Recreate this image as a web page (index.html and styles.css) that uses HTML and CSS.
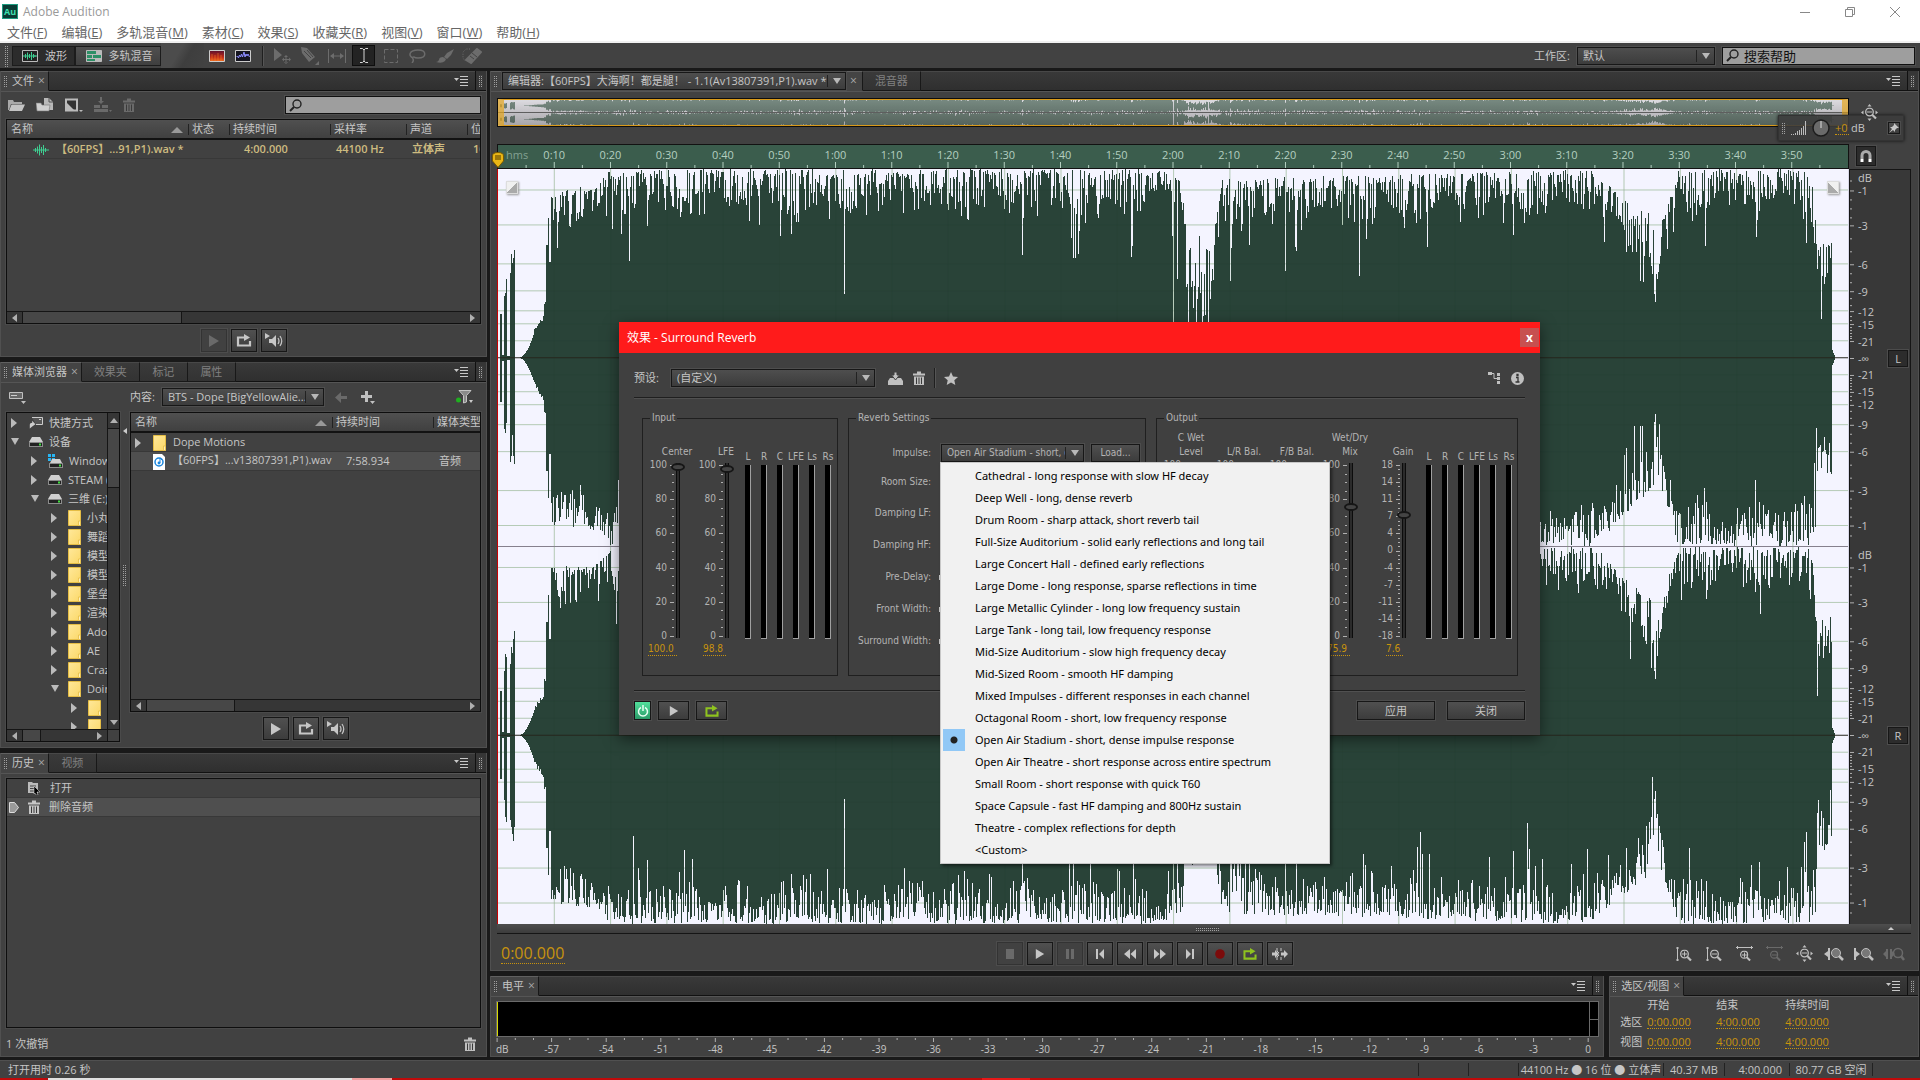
FILE: index.html
```html
<!DOCTYPE html>
<html lang="zh-CN">
<head>
  <meta charset="UTF-8">
  <meta name="viewport" content="width=device-width, initial-scale=1">
  <title>Adobe Audition</title>
  <link rel="stylesheet" href="styles.css">
</head>
<body>
  <!-- Icon sprite -->
  <svg class="sprite" aria-hidden="true">
    <defs>
      <linearGradient id="folderFill" x1="0" y1="0" x2="1" y2="1"><stop offset="0" stop-color="#ffe89a"/><stop offset="1" stop-color="#fbd868"/></linearGradient>
      <linearGradient id="heat" x1="0" y1="0" x2="0" y2="1"><stop offset="0" stop-color="#5a1030"/><stop offset=".6" stop-color="#c02a18"/><stop offset="1" stop-color="#f07020"/></linearGradient>
    </defs>
    <symbol id="i-menu" viewBox="0 0 14 10"><path d="M0 2h5L2.500 5z" fill="#c8c8c8"/><path d="M6 .5h8M6 3.500h8M6 6.500h8M6 9.500h8" stroke="#c8c8c8"/></symbol>
    <symbol id="i-search" viewBox="0 0 13 13"><circle cx="8" cy="5" r="4" fill="none" stroke="#222" stroke-width="1.400"/><path d="M5 8L1 12" stroke="#222" stroke-width="2"/></symbol>
    <symbol id="i-open" viewBox="0 0 17 14"><path d="M0 2h5l1 2h8v2H3L1 12H0z" fill="#a9a9a9"/><path d="M3.500 6.500H17L14 13H1z" fill="#c4c4c4"/></symbol>
    <symbol id="i-import" viewBox="0 0 18 16"><path d="M8 1h5l4 4v8H8z" fill="#b9b9b9"/><path d="M13 1v4h4" fill="none" stroke="#555"/><path d="M0 6h5l1 2h8l-1 6H1z" fill="#cfcfcf" stroke="#777" stroke-width=".6"/></symbol>
    <symbol id="i-new" viewBox="0 0 18 14"><path d="M1 1.500h11v11H1z" fill="#333" stroke="#bbb" stroke-width="2"/><path d="M2 5l7 7H2z" fill="#bbb"/><path d="M14 12h4l-2 2z" fill="#bbb"/></symbol>
    <symbol id="i-insert" viewBox="0 0 18 16"><path d="M0 8h6v3H0zM8 8h6v3H8zM0 12h14v3H0z"/><path d="M6 0h2v4h2L7 7 4 4h2zM15 13h3l-1.500 2z"/></symbol>
    <symbol id="i-trash" viewBox="0 0 12 14"><path d="M0 2.500h12v2H0zM4 .5h4v2H4z"/><path d="M1 5.500h10V14H1z"/><path d="M3.500 6.500v6.500M6 6.500v6.500M8.500 6.500v6.500" stroke="#3a3a3a"/></symbol>
    <symbol id="i-play" viewBox="0 0 12 12"><path d="M1 0l10 6-10 6z"/></symbol>
    <symbol id="i-loop" viewBox="0 0 16 13"><path d="M9 3.500H2v8h12V7" fill="none" stroke="currentColor" stroke-width="2.200"/><path d="M8 0l6 3.500L8 7z" fill="currentColor"/></symbol>
    <symbol id="i-speaker" viewBox="0 0 18 16"><path d="M0 0l5 3-5 3zM4 6h3l4-4v12l-4-4H4z"/><path d="M13 5q2 3 0 6M15 3q3.500 5 0 10" fill="none" stroke="currentColor" stroke-width="1.200"/></symbol>
    <symbol id="i-drive" viewBox="0 0 14 10"><path d="M3 0h8l3 5H0z" fill="#d0d0d0"/><path d="M0 5h14v5H0z" fill="#8c8c8c"/><path d="M1 6h12v3H1z" fill="#222"/><path d="M10 6.500h2v2h-2z" fill="#3fe03f"/></symbol>
    <symbol id="i-windrive" viewBox="0 0 15 14"><path d="M0 0h3v3H0zM4 0h3v3H4zM0 4h3v3H0zM4 4h3v3H4z" fill="#27b6f4"/><path d="M4 5h8l2 4H2z" fill="#d0d0d0"/><path d="M1 9h14v5H1z" fill="#8c8c8c"/><path d="M2 10h12v3H2z" fill="#222"/><path d="M11 10.500h2v2h-2z" fill="#3fe03f"/></symbol>
    <symbol id="i-shortcut" viewBox="0 0 14 12"><path d="M3 .5h10.500v7H7" fill="#555" stroke="#ccc"/><path d="M10 2.500h2" stroke="#ccc"/><path d="M1 12V8q0-2 3-2V4l4 3.500L4 10z" fill="#ccc" transform="scale(.8 .95)"/></symbol>
    <symbol id="i-folder" viewBox="0 0 13 16"><path d="M.5.500h12v15H.5z" fill="url(#folderFill)" stroke="#e5bd45"/><path d="M10.500 11h2v4.500h-2z" fill="#fff0b8" stroke="#e5bd45" stroke-width=".8"/></symbol>
    <symbol id="i-file" viewBox="0 0 12 16"><path d="M0 0h9l3 3v13H0z" fill="#fff"/><circle cx="6" cy="8" r="4" fill="none" stroke="#1a86dd" stroke-width="1.500"/><path d="M7 9V4l2 2" fill="none" stroke="#1a86dd"/><circle cx="6" cy="9" r="1.400" fill="#1a86dd"/></symbol>
    <symbol id="i-wave" viewBox="0 0 16 12"><path d="M0 6h16M2.500 4v4M4.500 2.500v7M6.500.500v11M8.500 3v6M10.500 1v10M12.500 4v4" stroke="#3ecf92" fill="none"/></symbol>
    <symbol id="i-waveform" viewBox="0 0 16 12"><path d="M.5.500h15v11H.5z" fill="#222" stroke="#bbb"/><path d="M1 6h14M3.500 4v4M5.500 2.500v7M7.500 4v4M9.500 2v8M11.500 4v4M13 5v2" stroke="#3ecf92"/></symbol>
    <symbol id="i-multi" viewBox="0 0 16 12"><path d="M.5.500h15v11H.5z" fill="#bbb" stroke="#bbb"/><path d="M1 1h9v3H1zM1 5h5v3H1zM7 5h8v3H7zM1 9h8v2H1z" fill="#2d8f66"/></symbol>
    <symbol id="i-spectral" viewBox="0 0 16 12"><path d="M.5.500h15v11H.5z" fill="url(#heat)" stroke="#ccc"/><path d="M3 4v7M6 5v6M9 3v8M12 5v6" stroke="#f58a2a" opacity=".5"/></symbol>
    <symbol id="i-pitch" viewBox="0 0 16 12"><path d="M.5.500h15v11H.5z" fill="#15151f" stroke="#ccc"/><path d="M1.500 7l1-1 1 2 1-3 1 2 1-3 1 3 1.500-5 1 5 1-3 1 2 1-2 1.500 3" fill="none" stroke="#8d8dff"/></symbol>
    <symbol id="i-move" viewBox="0 0 18 16"><path d="M0 0l8 7-8 6zM12 7l2 2h-4zM12 16l2-2h-4zM8 11.500l2-2v4zM17 11.500l-2-2v4zM11.500 8h1v7h-1zM9 11h6v1H9z"/></symbol>
    <symbol id="i-razor" viewBox="0 0 18 18"><path d="M0 0l6 1 8 9-6 5-7-9zM14 18h4v-4z"/><path d="M3 4l7 7M6 3l6 7" stroke="#444"/></symbol>
    <symbol id="i-slip" viewBox="0 0 18 14"><path d="M.5 0v14M17.500 0v14M3 7h12" stroke="currentColor"/><path d="M2 7l4-3v6zM16 7l-4-3v6z"/></symbol>
    <symbol id="i-ibeam" viewBox="0 0 8 15"><path d="M0 .5h2.500L4 2 5.500.500H8M4 2v11M0 14.500h2.500L4 13l1.500 1.500H8" fill="none" stroke="#d5d5d5"/></symbol>
    <symbol id="i-marquee" viewBox="0 0 14 14"><path d="M.5.500h13v13H.5z" fill="none" stroke="currentColor" stroke-dasharray="4 2"/></symbol>
    <symbol id="i-lasso" viewBox="0 0 17 14"><path d="M4 9C-1 7 0 1 9 1s9 8 0 8q-3 0-4-1-2 0-1 2t-1 4" fill="none" stroke="currentColor" stroke-width="1.500"/></symbol>
    <symbol id="i-brush" viewBox="0 0 18 14"><path d="M18 0l-7 4-3 4 3 2 4-4zM7 8q-4 0-4 3-1 2-3 2 6 2 9-1l1-2z"/></symbol>
    <symbol id="i-heal" viewBox="0 0 20 16"><path d="M15 1l4 3L9 15l-5-3z" stroke="currentColor" stroke-width="2" stroke-linejoin="round"/><path d="M10 5l5 4M8 8l4 3" stroke="#444"/><path d="M8 1H4L1 4v6l2 3" fill="none" stroke="currentColor" stroke-dasharray="1 1.500"/></symbol>
    <symbol id="i-filter" viewBox="0 0 17 14"><path d="M3 .5h12l-4.500 5V12l-3 1V5.500z" fill="#8a8a8a" stroke="#c4c4c4"/><circle cx="2.500" cy="10" r="2.500" fill="#1faf1f"/><path d="M13 10h4l-2 3z" fill="#ccc"/></symbol>
    <symbol id="i-plus" viewBox="0 0 14 13"><path d="M4 0h3v4h4v3H7v4H4V7H0V4h4zM9 10h5l-2.500 3z"/></symbol>
    <symbol id="i-back" viewBox="0 0 12 11"><path d="M0 5.500L6 0v4h6v3H6v4z"/></symbol>
    <symbol id="i-display" viewBox="0 0 17 13"><path d="M.5 1.500h13v6H.5z" fill="#666" stroke="#c0c0c0"/><path d="M2 4.500h6" stroke="#ccc"/><path d="M12 10h5l-2.500 3z"/></symbol>
    <symbol id="i-doc" viewBox="0 0 13 14"><path d="M0 1h4l1 1h5v10H0z" fill="#bbb"/><path d="M2 5h6M2 7.500h5M2 10h4" stroke="#444"/><path d="M6 5l6 6H9l1 3-2 0-1-2-1 1z" fill="#000" stroke="#ddd" stroke-width=".5"/></symbol>
    <symbol id="i-save" viewBox="0 0 15 13"><path d="M2 6h11l2 3v4H0V9z"/><path d="M6 0h3v3h2.500L7.500 8 3.500 3H6z" stroke="#404040"/></symbol>
    <symbol id="i-star" viewBox="0 0 14 13"><path d="M7 0l2 4.500 5 .5-3.700 3.300L11.300 13 7 10.600 2.700 13l1-4.700L0 5l5-.5z"/></symbol>
    <symbol id="i-route" viewBox="0 0 12 12"><path d="M0 0h4v3H0zM9 1h3v3H9zM9 5h3v3H9zM9 9h3v3H9z"/><path d="M4 1.500h2v5h3" fill="none" stroke="currentColor"/></symbol>
    <symbol id="i-info" viewBox="0 0 13 13"><circle cx="6.500" cy="6.500" r="6.500"/><path d="M5 5.500h2v4.500M4.500 10h4M6 2.500h1v1H6z" stroke="#333" fill="none" stroke-width="1.300"/></symbol>
    <symbol id="i-power" viewBox="0 0 12 12"><path d="M4 2.500a4.500 4.500 0 1 0 4 0M6 0v6" fill="none" stroke="#e8fff3" stroke-width="1.500"/></symbol>
    <symbol id="i-stop" viewBox="0 0 10 10"><path d="M1 0h8v10H1z"/></symbol>
    <symbol id="i-pause" viewBox="0 0 10 10"><path d="M1 0h3v10H1zM6 0h3v10H6z"/></symbol>
    <symbol id="i-start" viewBox="0 0 10 10"><path d="M1 0h2v10H1zM9 0v10L4 5z"/></symbol>
    <symbol id="i-rew" viewBox="0 0 12 10"><path d="M6 0v10L0 5zM12 0v10L6.500 5z"/></symbol>
    <symbol id="i-fwd" viewBox="0 0 12 10"><path d="M0 0v10l5.500-5zM6 0v10l6-5z"/></symbol>
    <symbol id="i-end" viewBox="0 0 10 10"><path d="M7 0h2v10H7zM1 0v10l5-5z"/></symbol>
    <symbol id="i-rec" viewBox="0 0 10 10"><circle cx="5" cy="5" r="4.800" fill="#7c0b0b"/></symbol>
    <symbol id="i-skip" viewBox="0 0 16 12"><path d="M0 4.500h3V2l4 4-4 4V7.500H0zM9 4.500h3V2l4 4-4 4V7.500H9z"/><path d="M5 0v3l2 2M9 0v3M5 12V9l2-2M9 12V9" fill="none" stroke="currentColor"/></symbol>
    <symbol id="g-lens" viewBox="0 0 12 12"><circle cx="4.500" cy="4.500" r="3.800" fill="none" stroke="currentColor" stroke-width="1.300"/><path d="M7.500 7.500L11 11" stroke="currentColor" stroke-width="2.200"/></symbol>
    <symbol id="i-vin" viewBox="0 0 17 16"><path d="M1.500 1v14M0 2h3M0 14h3M6 8h5M8.500 5.500v5" stroke="currentColor"/><use href="#g-lens" x="4" y="3.500" width="12" height="12"/></symbol>
    <symbol id="i-vout" viewBox="0 0 17 16"><path d="M1.500 1v14M0 2h3M0 14h3M6 8h5" stroke="currentColor"/><use href="#g-lens" x="4" y="3.500" width="12" height="12"/></symbol>
    <symbol id="i-hin" viewBox="0 0 17 16"><path d="M0 1.500h17M1.500 0v3M15.500 0v3M6 9h5M8.500 6.500v5" stroke="currentColor"/><use href="#g-lens" x="4" y="4.500" width="11" height="11"/></symbol>
    <symbol id="i-hout" viewBox="0 0 17 16"><path d="M0 1.500h17M1.500 0v3M15.500 0v3M6 9h5" stroke="currentColor"/><use href="#g-lens" x="4" y="4.500" width="11" height="11"/></symbol>
    <symbol id="i-full" viewBox="0 0 17 17"><path d="M8.500 0l2 2.500h-4zM8.500 17l2-2.500h-4zM0 8.500l2.500-2v4zM17 8.500l-2.500-2v4z"/><path d="M6 8h5" stroke="currentColor"/><use href="#g-lens" x="4" y="3.500" width="12" height="12"/></symbol>
    <symbol id="i-zl" viewBox="0 0 20 14"><path d="M4 1h2v12H4zM0 7l4-3v6z"/><circle cx="12" cy="6" r="4.500" fill="#777" stroke="currentColor"/><path d="M15 9l4 4" stroke="currentColor" stroke-width="2.500"/></symbol>
    <symbol id="i-zr" viewBox="0 0 20 14"><path d="M0 1h2v12H0zM6 7L2 4v6z"/><circle cx="12" cy="6" r="4.500" fill="#777" stroke="currentColor"/><path d="M15 9l4 4" stroke="currentColor" stroke-width="2.500"/></symbol>
    <symbol id="i-zs" viewBox="0 0 22 14"><path d="M3 2h2v10H3zM0 7l3-3v6zM7 2h2v10H7zM12 7L9 4v6z"/><circle cx="15" cy="6" r="4.500" fill="none" stroke="currentColor" stroke-width="1.500"/><path d="M18 9l3 4" stroke="currentColor" stroke-width="2.500"/></symbol>
    <symbol id="i-magnet" viewBox="0 0 12 13"><path d="M2 9V5.500a4 4 0 0 1 8 0V9" fill="none" stroke="#aaa" stroke-width="3"/><path d="M.5 9h3v3h-3zM8.500 9h3v3h-3z" fill="#fff"/></symbol>
    <symbol id="i-pin" viewBox="0 0 10 10"><path d="M5 0l5 5-2 0-2 2 0 2-2-2-4 3 3-4-2-2h2l2-2z"/></symbol>
  </svg>

  <!-- Title bar and menu -->
  <header class="titlebar">
    <div class="title-row">
      <span class="app-logo">Au</span>
      <span class="app-name">Adobe Audition</span>
      <div class="win-buttons">
        <button aria-label="最小化"><svg width="10" height="10"><path d="M0 5.500h10" stroke="#888"/></svg></button>
        <button aria-label="还原"><svg width="10" height="10"><path d="M.5 2.500h7v7h-7zM2.500 2V.5h7v7H8" fill="none" stroke="#888"/></svg></button>
        <button aria-label="关闭窗口"><svg width="10" height="10"><path d="M0 0l10 10M10 0L0 10" stroke="#888"/></svg></button>
      </div>
    </div>
    <nav class="menubar">
      <a href="#">文件(<u>F</u>)</a><a href="#">编辑(<u>E</u>)</a><a href="#">多轨混音(<u>M</u>)</a><a href="#">素材(<u>C</u>)</a><a href="#">效果(<u>S</u>)</a><a href="#">收藏夹(<u>R</u>)</a><a href="#">视图(<u>V</u>)</a><a href="#">窗口(<u>W</u>)</a><a href="#">帮助(<u>H</u>)</a>
    </nav>
  </header>

  <!-- Toolbar -->
  <div class="toolbar">
    <i class="grip tall"></i>
    <button class="mode on"><svg width="16" height="12"><use href="#i-waveform"/></svg>波形</button>
    <button class="mode multi"><svg width="16" height="12"><use href="#i-multi"/></svg>多轨混音</button>
    <span class="slope"></span>
    <div class="tools">
      <button class="view-btn" aria-label="频谱"><svg width="16" height="12"><use href="#i-spectral"/></svg></button>
      <button class="view-btn" aria-label="音高"><svg width="16" height="12"><use href="#i-pitch"/></svg></button>
      <span class="vline"></span>
      <button class="tool off" aria-label="移动"><svg width="18" height="16"><use href="#i-move"/></svg></button>
      <button class="tool off" aria-label="切断"><svg width="18" height="18"><use href="#i-razor"/></svg></button>
      <button class="tool off" aria-label="滑动"><svg width="18" height="14"><use href="#i-slip"/></svg></button>
      <button class="tool active" aria-label="时间选区"><svg width="8" height="15"><use href="#i-ibeam"/></svg></button>
      <button class="tool off" aria-label="框选"><svg width="14" height="14"><use href="#i-marquee"/></svg></button>
      <button class="tool off" aria-label="套索"><svg width="17" height="14"><use href="#i-lasso"/></svg></button>
      <button class="tool off" aria-label="画笔"><svg width="18" height="14"><use href="#i-brush"/></svg></button>
      <button class="tool off" aria-label="修复"><svg width="20" height="16"><use href="#i-heal"/></svg></button>
    </div>
    <div class="workspace">
      <label for="workspace">工作区:</label>
      <span class="drop"><select id="workspace"><option>默认</option></select></span>
      <span class="search help"><svg width="13" height="13"><use href="#i-search"/></svg><input type="text" value="搜索帮助" aria-label="搜索帮助"></span>
    </div>
  </div>

  <main class="workbench">
    <div class="left-col">
      <!-- Files -->
      <section class="panel">
        <div class="tabs">
          <div class="tab on"><i class="grip"></i>文件<button class="tab-x" aria-label="关闭">×</button></div>
          <div class="tab-fill"><button class="panel-menu" aria-label="菜单"><svg width="14" height="10"><use href="#i-menu"/></svg></button></div>
          <div class="tab-end"><i class="grip"></i></div>
        </div>
        <div class="panel-body">
          <div class="file-tools">
            <button class="flat" aria-label="打开"><svg width="17" height="14"><use href="#i-open"/></svg></button>
            <button class="flat" aria-label="导入"><svg width="18" height="16"><use href="#i-import"/></svg></button>
            <button class="flat" aria-label="新建"><svg width="18" height="14"><use href="#i-new"/></svg></button>
            <button class="flat off" aria-label="插入"><svg width="18" height="16"><use href="#i-insert"/></svg></button>
            <button class="flat off" aria-label="删除"><svg width="12" height="14"><use href="#i-trash"/></svg></button>
            <span class="search"><svg width="13" height="13"><use href="#i-search"/></svg><input type="text" aria-label="搜索文件"></span>
          </div>
          <div class="box">
            <div class="box-main">
              <table class="list files">
                <thead><tr><th>名称<i class="sort"></i></th><th>状态</th><th>持续时间</th><th>采样率</th><th>声道</th><th>位</th></tr></thead>
                <tbody><tr class="open-file"><td><svg width="16" height="12"><use href="#i-wave"/></svg>【60FPS】...91,P1).wav *</td><td></td><td class="num">4:00.000</td><td>44100 Hz</td><td>立体声</td><td>16</td></tr></tbody>
              </table>
            </div>
            <div class="hscroll"><i class="arr l"></i><span class="thumb w1"></span><i class="arr r"></i></div>
          </div>
          <div class="preview-bar">
            <button class="btn off" aria-label="播放"><svg width="12" height="12"><use href="#i-play"/></svg></button>
            <button class="btn" aria-label="循环"><svg width="16" height="13"><use href="#i-loop"/></svg></button>
            <button class="btn" aria-label="自动播放"><svg width="18" height="16"><use href="#i-speaker"/></svg></button>
          </div>
        </div>
      </section>

      <!-- Media browser -->
      <section class="panel">
        <div class="tabs">
          <div class="tab on"><i class="grip"></i>媒体浏览器<button class="tab-x" aria-label="关闭">×</button></div>
          <div class="tab w58">效果夹</div>
          <div class="tab w48">标记</div>
          <div class="tab w48">属性</div>
          <div class="tab-fill"><button class="panel-menu" aria-label="菜单"><svg width="14" height="10"><use href="#i-menu"/></svg></button></div>
          <div class="tab-end"><i class="grip"></i></div>
        </div>
        <div class="panel-body">
          <div class="media-tools">
            <button class="flat" aria-label="显示"><svg width="17" height="13"><use href="#i-display"/></svg></button>
            <label for="content">内容:</label>
            <span class="drop"><select id="content"><option>BTS - Dope [BigYellowAlie...</option></select></span>
            <button class="flat off" aria-label="后退"><svg width="12" height="11"><use href="#i-back"/></svg></button>
            <button class="flat" aria-label="添加"><svg width="14" height="13"><use href="#i-plus"/></svg></button>
            <button class="flat push" aria-label="筛选"><svg width="17" height="14"><use href="#i-filter"/></svg></button>
          </div>
          <div class="media-split">
            <div class="box tree-box">
              <div class="tree-row">
                <ul class="tree">
                  <li><i class="tw"></i><svg width="14" height="12"><use href="#i-shortcut"/></svg>快捷方式</li>
                  <li><i class="tw open"></i><svg width="14" height="10"><use href="#i-drive"/></svg>设备</li>
                  <li class="d1"><i class="tw"></i><svg width="15" height="14"><use href="#i-windrive"/></svg>Windows (C:)</li>
                  <li class="d1"><i class="tw"></i><svg width="14" height="10"><use href="#i-drive"/></svg>STEAM (D:)</li>
                  <li class="d1"><i class="tw open"></i><svg width="14" height="10"><use href="#i-drive"/></svg>三维 (E:)</li>
                  <li class="d2"><i class="tw"></i><svg width="13" height="16"><use href="#i-folder"/></svg>小丸</li>
                  <li class="d2"><i class="tw"></i><svg width="13" height="16"><use href="#i-folder"/></svg>舞蹈</li>
                  <li class="d2"><i class="tw"></i><svg width="13" height="16"><use href="#i-folder"/></svg>模型</li>
                  <li class="d2"><i class="tw"></i><svg width="13" height="16"><use href="#i-folder"/></svg>模型</li>
                  <li class="d2"><i class="tw"></i><svg width="13" height="16"><use href="#i-folder"/></svg>堡垒</li>
                  <li class="d2"><i class="tw"></i><svg width="13" height="16"><use href="#i-folder"/></svg>渲染</li>
                  <li class="d2"><i class="tw"></i><svg width="13" height="16"><use href="#i-folder"/></svg>Adobe</li>
                  <li class="d2"><i class="tw"></i><svg width="13" height="16"><use href="#i-folder"/></svg>AE</li>
                  <li class="d2"><i class="tw"></i><svg width="13" height="16"><use href="#i-folder"/></svg>Crazy</li>
                  <li class="d2"><i class="tw open"></i><svg width="13" height="16"><use href="#i-folder"/></svg>Doing</li>
                  <li class="d3"><i class="tw"></i><svg width="13" height="16"><use href="#i-folder"/></svg></li>
                  <li class="d3"><i class="tw"></i><svg width="13" height="16"><use href="#i-folder"/></svg></li>
                </ul>
                <div class="vscroll"><i class="arr u"></i><span class="thumb"></span><i class="arr d"></i></div>
              </div>
              <div class="hscroll"><i class="arr l"></i><span class="thumb w2"></span><i class="arr r"></i><span class="corner"></span></div>
            </div>
            <div class="splitter"><i class="tw left"></i><i class="grip tall"></i></div>
            <div class="media-list">
              <div class="box">
                <div class="box-main">
                  <table class="list media">
                    <thead><tr><th>名称<i class="sort"></i></th><th>持续时间</th><th>媒体类型</th></tr></thead>
                    <tbody>
                      <tr><td><i class="tw"></i><svg width="13" height="16"><use href="#i-folder"/></svg>Dope Motions</td><td></td><td></td></tr>
                      <tr class="sel"><td><i class="tw none"></i><svg width="12" height="16"><use href="#i-file"/></svg>【60FPS】...v13807391,P1).wav</td><td class="num">7:58.934</td><td>音频</td></tr>
                    </tbody>
                  </table>
                </div>
                <div class="hscroll"><i class="arr l"></i><span class="thumb w3"></span><i class="arr r"></i></div>
              </div>
              <div class="preview-bar">
                <button class="btn" aria-label="播放"><svg width="12" height="12"><use href="#i-play"/></svg></button>
                <button class="btn" aria-label="循环"><svg width="16" height="13"><use href="#i-loop"/></svg></button>
                <button class="btn" aria-label="自动播放"><svg width="18" height="16"><use href="#i-speaker"/></svg></button>
              </div>
            </div>
          </div>
        </div>
      </section>

      <!-- History -->
      <section class="panel">
        <div class="tabs">
          <div class="tab on"><i class="grip"></i>历史<button class="tab-x" aria-label="关闭">×</button></div>
          <div class="tab w48">视频</div>
          <div class="tab-fill"><button class="panel-menu" aria-label="菜单"><svg width="14" height="10"><use href="#i-menu"/></svg></button></div>
          <div class="tab-end"><i class="grip"></i></div>
        </div>
        <div class="panel-body">
          <ul class="box history">
            <li><span class="mark"></span><svg width="13" height="14"><use href="#i-doc"/></svg>打开</li>
            <li class="sel"><span class="mark"><svg width="10" height="11"><path d="M.5.500h5l4 5-4 5h-5z" fill="#999" stroke="#ddd"/></svg></span><svg width="12" height="14"><use href="#i-trash"/></svg>删除音频</li>
          </ul>
          <div class="undo-bar">1 次撤销<button class="flat push" aria-label="删除"><svg width="12" height="14"><use href="#i-trash"/></svg></button></div>
        </div>
      </section>
    </div>

    <div class="right-col">
      <!-- Editor -->
      <section class="panel">
        <div class="tabs">
          <div class="tab on editor-tab"><i class="grip"></i>
            <span class="drop doc"><select aria-label="编辑器"><option>编辑器:【60FPS】大海啊！都是腿！ - 1.1(Av13807391,P1).wav *</option></select></span>
            <button class="tab-x" aria-label="关闭">×</button></div>
          <div class="tab w58">混音器</div>
          <div class="tab-fill"><button class="panel-menu" aria-label="菜单"><svg width="14" height="10"><use href="#i-menu"/></svg></button></div>
          <div class="tab-end"><i class="grip"></i></div>
        </div>
        <div class="panel-body editor">
          <div class="editor-grid">
            <div class="overview" id="overview"></div>
            <div class="overview-side"><button class="flat" aria-label="全部缩小"><svg width="17" height="17"><use href="#i-full"/></svg></button></div>
            <div class="ruler"><svg id="ruler" width="100%" height="100%"></svg>
              <svg class="playhead" width="12" height="16"><path d="M.5 4q0-3.500 5.500-3.500T11.500 4v5L6 15.500.500 9z" fill="#e9b616" stroke="#7a5a00"/><path d="M4 3v5M6 3v5M8 3v5" stroke="#4a3600"/></svg>
            </div>
            <div class="ruler-side"><button class="btn snap" aria-label="吸附"><svg width="12" height="13"><use href="#i-magnet"/></svg></button></div>
            <div class="wave" id="wave"><span class="fade fl"></span><span class="fade fr"></span></div>
            <div class="db"><svg id="db" width="100%" height="100%"></svg>
              <div class="chan"><button class="btn ch">L</button></div>
              <div class="chan"><button class="btn ch">R</button></div>
            </div>
            <div class="wave-scroll"><i class="grip wide"></i><i class="up"></i></div>
          </div>
          <div class="transport">
            <input class="hot time" type="text" value="0:00.000" aria-label="当前时间">
            <div class="keys">
              <button class="btn off" aria-label="停止"><svg width="10" height="10"><use href="#i-stop"/></svg></button>
              <button class="btn" aria-label="播放"><svg width="12" height="10"><use href="#i-play"/></svg></button>
              <button class="btn off" aria-label="暂停"><svg width="10" height="10"><use href="#i-pause"/></svg></button>
              <button class="btn" aria-label="到开头"><svg width="10" height="10"><use href="#i-start"/></svg></button>
              <button class="btn" aria-label="快退"><svg width="12" height="10"><use href="#i-rew"/></svg></button>
              <button class="btn" aria-label="快进"><svg width="12" height="10"><use href="#i-fwd"/></svg></button>
              <button class="btn" aria-label="到结尾"><svg width="10" height="10"><use href="#i-end"/></svg></button>
              <button class="btn" aria-label="录制"><svg width="10" height="10"><use href="#i-rec"/></svg></button>
              <button class="btn green" aria-label="循环播放"><svg width="16" height="12"><use href="#i-loop"/></svg></button>
              <button class="btn" aria-label="跳过选区"><svg width="16" height="12"><use href="#i-skip"/></svg></button>
            </div>
            <div class="zooms">
              <button class="flat" aria-label="垂直放大"><svg width="17" height="16"><use href="#i-vin"/></svg></button>
              <button class="flat" aria-label="垂直缩小"><svg width="17" height="16"><use href="#i-vout"/></svg></button>
              <button class="flat" aria-label="水平放大"><svg width="17" height="16"><use href="#i-hin"/></svg></button>
              <button class="flat off" aria-label="水平缩小"><svg width="17" height="16"><use href="#i-hout"/></svg></button>
              <button class="flat" aria-label="全部缩小"><svg width="17" height="17"><use href="#i-full"/></svg></button>
              <button class="flat" aria-label="放大入点"><svg width="20" height="14"><use href="#i-zl"/></svg></button>
              <button class="flat" aria-label="放大出点"><svg width="20" height="14"><use href="#i-zr"/></svg></button>
              <button class="flat off" aria-label="放大选区"><svg width="22" height="14"><use href="#i-zs"/></svg></button>
            </div>
          </div>
        </div>
      </section>

      <div class="bottom-row">
        <!-- Levels -->
        <section class="panel">
          <div class="tabs">
            <div class="tab on"><i class="grip"></i>电平<button class="tab-x" aria-label="关闭">×</button></div>
            <div class="tab-fill"><button class="panel-menu" aria-label="菜单"><svg width="14" height="10"><use href="#i-menu"/></svg></button></div>
            <div class="tab-end"><i class="grip"></i></div>
          </div>
          <div class="panel-body levels">
            <div class="level-box"><span class="level-start"></span><span class="clip"></span></div>
            <svg id="level-scale" width="100%" height="19"></svg>
          </div>
        </section>
        <!-- Selection / view -->
        <section class="panel">
          <div class="tabs">
            <div class="tab on"><i class="grip"></i>选区/视图<button class="tab-x" aria-label="关闭">×</button></div>
            <div class="tab-fill"><button class="panel-menu" aria-label="菜单"><svg width="14" height="10"><use href="#i-menu"/></svg></button></div>
            <div class="tab-end"><i class="grip"></i></div>
          </div>
          <div class="panel-body times">
            <table class="selview">
              <tr><th></th><th>开始</th><th>结束</th><th>持续时间</th></tr>
              <tr><th>选区</th><td><input class="hot" value="0:00.000" aria-label="选区开始"></td><td><input class="hot" value="4:00.000" aria-label="选区结束"></td><td><input class="hot" value="4:00.000" aria-label="选区持续时间"></td></tr>
              <tr><th>视图</th><td><input class="hot" value="0:00.000" aria-label="视图开始"></td><td><input class="hot" value="4:00.000" aria-label="视图结束"></td><td><input class="hot" value="4:00.000" aria-label="视图持续时间"></td></tr>
            </table>
          </div>
        </section>
      </div>
    </div>
  </main>

  <footer class="status">
    <span class="msg">打开用时 0.26 秒</span>
    <span class="cell s50"></span><span class="cell s50"></span>
    <span class="cell s145">44100 Hz ● 16 位 ● 立体声</span>
    <span class="cell s61">40.37 MB</span>
    <span class="cell s65">4:00.000</span>
    <span class="cell s83">80.77 GB 空闲</span>
    <span class="cell s48"></span>
  </footer>
  <div class="taskline"><span class="a"></span><span class="b"></span><span class="d"></span></div>

  <!-- Volume HUD -->
  <div class="hud">
    <i class="grip"></i>
    <svg width="16" height="14"><path d="M.5 14v-1M2.500 14v-1M4.500 14v-2M6.500 14v-4M8.500 14V9M10.500 14V7M12.500 14V5M14.500 14V0" stroke="#bbb"/></svg>
    <svg width="18" height="18"><circle cx="9" cy="9" r="8" fill="#6a6a6a" stroke="#1c1c1c" stroke-width="1.500"/><path d="M9 2v7" stroke="#ddd"/></svg>
    <input class="hot gain" value="+0" aria-label="增益"><span class="unit">dB</span>
    <button class="btn pin" aria-label="固定"><svg width="10" height="10"><use href="#i-pin"/></svg></button>
  </div>

  <!-- Effect window -->
  <div class="dialog" role="dialog" aria-labelledby="dlg-title">
    <div class="dlg-title"><span id="dlg-title">效果 - Surround Reverb</span><button class="dlg-x" aria-label="关闭效果">x</button></div>
    <div class="dlg-body">
      <div class="preset-row">
        <label for="preset">预设:</label>
        <span class="drop"><select id="preset"><option>(自定义)</option></select></span>
        <button class="flat" aria-label="保存预设"><svg width="15" height="13"><use href="#i-save"/></svg></button>
        <button class="flat" aria-label="删除预设"><svg width="12" height="14"><use href="#i-trash"/></svg></button>
        <span class="vline"></span>
        <button class="flat" aria-label="收藏"><svg width="14" height="13"><use href="#i-star"/></svg></button>
        <button class="flat push" aria-label="声道映射"><svg width="12" height="12"><use href="#i-route"/></svg></button>
        <button class="flat" aria-label="信息"><svg width="13" height="13"><use href="#i-info"/></svg></button>
      </div>
      <div class="groups">
        <fieldset>
          <legend>Input</legend>
          <div class="strip" id="input-strip"></div>
        </fieldset>
        <fieldset>
          <legend>Reverb Settings</legend>
          <div class="reverb">
            <label for="impulse">Impulse:</label>
            <div class="impulse"><span class="drop"><select id="impulse"><option>Open Air Stadium - short, dense impulse response</option></select></span><button class="btn load">Load...</button></div>
            <span>Room Size:</span><i></i>
            <span>Damping LF:</span><i></i>
            <span>Damping HF:</span><i></i>
            <span>Pre-Delay:</span><i class="notch"></i>
            <span>Front Width:</span><i class="notch"></i>
            <span>Surround Width:</span><i class="notch"></i>
          </div>
        </fieldset>
        <fieldset>
          <legend>Output</legend>
          <div class="strip wide" id="output-strip"></div>
        </fieldset>
      </div>
      <div class="dlg-foot">
        <button class="btn power" aria-label="开关"><svg width="12" height="12"><use href="#i-power"/></svg></button>
        <button class="btn w31" aria-label="预览播放"><svg width="12" height="10"><use href="#i-play"/></svg></button>
        <button class="btn w31 green" aria-label="循环预览"><svg width="16" height="12"><use href="#i-loop"/></svg></button>
        <button class="btn w78 push">应用</button>
        <button class="btn w78">关闭</button>
      </div>
    </div>
  </div>

  <ul class="popup" role="listbox" aria-label="Impulse">
    <li>Cathedral - long response with slow HF decay</li>
    <li>Deep Well - long, dense reverb</li>
    <li>Drum Room - sharp attack, short reverb tail</li>
    <li>Full-Size Auditorium - solid early reflections and long tail</li>
    <li>Large Concert Hall - defined early reflections</li>
    <li>Large Dome - long response, sparse reflections in time</li>
    <li>Large Metallic Cylinder - long low frequency sustain</li>
    <li>Large Tank - long tail, low frequency response</li>
    <li>Mid-Size Auditorium - slow high frequency decay</li>
    <li>Mid-Sized Room - smooth HF damping</li>
    <li>Mixed Impulses - different responses in each channel</li>
    <li>Octagonal Room - short, low frequency response</li>
    <li class="checked">Open Air Stadium - short, dense impulse response</li>
    <li>Open Air Theatre - short response across entire spectrum</li>
    <li>Small Room - short response with quick T60</li>
    <li>Space Capsule - fast HF damping and 800Hz sustain</li>
    <li>Theatre - complex reflections for depth</li>
    <li>&lt;Custom&gt;</li>
  </ul>

  <script src="script.js"></script>
</body>
</html>
```
FILE: styles.css
```css
* {
  margin: 0;
  padding: 0;
  box-sizing: border-box;
}
body {
  font: 11px/14px "Open Sans", "Noto Sans CJK SC", sans-serif;
  background: #191919;
  color: #c6c6c6;
  height: 100vh;
  display: flex;
  flex-direction: column;
  overflow: hidden;
  white-space: nowrap;
}
button, input, select {
  font: inherit;
  color: inherit;
  border: 0;
  background: none;
  border-radius: 0;
}
button {
  display: flex;
  align-items: center;
  justify-content: center;
  flex: none;
}
svg { fill: currentColor; flex: none; display: block; }
ul { list-style: none; }
a { color: inherit; text-decoration: none; }
.sprite { position: absolute; width: 0; height: 0; }
.push { margin-left: auto; }

/* Title bar */
.titlebar {
  background: #fff;
  color: #666;
  border-bottom: 2px solid #f0f0f0;
  height: 43px;
  flex: none;
}
.title-row {
  display: flex;
  align-items: center;
  height: 23px;
  padding: 0 20px 0 2px;
  font-size: 12px;
  color: #999;
}
.app-logo {
  width: 16px;
  height: 15px;
  background: #0b3b34;
  border: 1px solid #1c9c80;
  color: #3fe0b0;
  font: bold 9px/13px "Open Sans", sans-serif;
  text-align: center;
  margin-right: 5px;
}
.win-buttons { display: flex; gap: 35px; margin-left: auto; }
.menubar {
  display: flex;
  gap: 14px;
  padding-left: 7px;
  font-size: 13px;
  line-height: 18px;
}

/* Grips: small dotted handles */
.grip {
  width: 4px;
  height: 12px;
  flex: none;
  background:
    repeating-linear-gradient(#404040 0 1px, transparent 1px 2px),
    repeating-linear-gradient(90deg, #a0a0a0 0 1px, transparent 1px 2px);
}
.grip.tall { height: 22px; }
.grip.wide { width: 24px; height: 4px; }
.vline {
  width: 2px;
  height: 20px;
  background: #1f1f1f;
  border-right: 1px solid #555;
}

/* Toolbar */
.toolbar {
  height: 25px;
  flex: none;
  background: #424242;
  display: flex;
  align-items: center;
  padding: 0 5px;
}
.mode {
  height: 20px;
  gap: 7px;
  padding: 0 7px 0 9px;
  border: 1px solid #1c1c1c;
  background: linear-gradient(#505050, #3f3f3f);
}
.mode.on { background: #2c2c2c; margin-left: 3px; width: 63px; }
.mode.multi { width: 86px; }
.slope {
  width: 43px;
  height: 25px;
  background: linear-gradient(120deg, #4c4c4c 40%, #3e3e3e 60%, #424242);
}
.tools { display: flex; align-items: center; }
.view-btn { width: 26px; height: 20px; }
.tools .vline { margin: 0 5px 0 6px; }
.tool { width: 27px; height: 21px; color: #c6c6c6; }
.tool.off { color: #6c6c6c; }
.tool.active { background: #232323; border: 1px solid #0e0e0e; width: 23px; margin: 0 2px; }
.workspace { margin-left: auto; display: flex; align-items: center; gap: 7px; }
.workspace .drop { width: 138px; }

/* Drop-downs */
.drop {
  position: relative;
  display: flex;
  height: 18px;
  border: 1px solid #171717;
  outline: 1px solid #4e4e4e;
  background: linear-gradient(#4e4e4e, #3c3c3c);
}
.drop select {
  appearance: none;
  width: 100%;
  padding: 0 18px 0 5px;
  outline: 0;
  line-height: 14px;
  overflow: hidden;
}
.drop::before {
  content: "";
  position: absolute;
  right: 17px;
  top: 2px;
  bottom: 2px;
  border-left: 1px solid #222;
}
.drop::after {
  content: "";
  position: absolute;
  right: 4px;
  top: 5px;
  border: 4px solid transparent;
  border-top: 6px solid #b8b8b8;
  border-bottom: 0;
}
.search {
  display: flex;
  align-items: center;
  gap: 5px;
  height: 18px;
  width: 196px;
  padding: 0 3px;
  background: #9e9e9e;
  border: 1px solid #111;
  outline: 1px solid #4e4e4e;
}
.search input { width: 100%; outline: 0; color: #111; }
.search.help { width: 193px; font-size: 13px; }

/* Panels */
.workbench {
  flex: 1;
  min-height: 0;
  display: grid;
  grid-template-columns: 487fr 1429fr;
  gap: 3px;
  padding: 3px 1px 3px 0;
}
.left-col {
  display: grid;
  grid-template-rows: 286fr 386fr 304fr;
  gap: 5px;
  min-width: 0;
  min-height: 0;
}
.right-col {
  display: grid;
  grid-template-rows: minmax(0, 1fr) 81px;
  gap: 5px;
  min-width: 0;
  min-height: 0;
}
.bottom-row {
  display: grid;
  grid-template-columns: 1115fr 310fr;
  gap: 5px;
}
.panel {
  background: #414141;
  border: 1px solid #505050;
  border-top: 0;
  display: flex;
  flex-direction: column;
  min-width: 0;
  min-height: 0;
  overflow: hidden;
}
.tabs { display: flex; height: 20px; flex: none; }
.tab {
  display: flex;
  align-items: center;
  justify-content: center;
  background: linear-gradient(#3a3a3a, #333);
  border: 1px solid #181818;
  border-width: 0 1px 1px 0;
  border-top: 1px solid #484848;
  color: #808080;
  padding: 0 3px;
}
.tab.on {
  background: #444;
  border-bottom-color: #444;
  border-top-color: #606060;
  color: #c6c6c6;
  gap: 4px;
}
.tab-x { color: #aaa; font-size: 12px; line-height: 12px; }
.w58 { width: 58px; }
.w48 { width: 48px; }
.tab-fill {
  flex: 1;
  background: linear-gradient(#393939, #2f2f2f);
  border-top: 1px solid #484848;
  border-bottom: 1px solid #111;
  display: flex;
  align-items: center;
  justify-content: flex-end;
  padding-right: 7px;
}
.tab-end {
  width: 11px;
  display: flex;
  align-items: center;
  justify-content: center;
  background: #363636;
  border-left: 1px solid #111;
  border-bottom: 1px solid #111;
}
.panel-body {
  flex: 1;
  min-height: 0;
  border-top: 1px solid #555;
  padding: 4px 5px;
  display: flex;
  flex-direction: column;
}
.flat { height: 18px; color: #c0c0c0; }
.off { color: #6a6a6a; }

/* Boxes, lists and scroll bars */
.box {
  border: 1px solid #0e0e0e;
  outline: 1px solid #4a4a4a;
  flex: 1;
  min-height: 0;
  min-width: 0;
  display: flex;
  flex-direction: column;
  overflow: hidden;
}
.box-main { flex: 1; min-height: 0; overflow: hidden; }
.list {
  width: 100%;
  table-layout: fixed;
  border-collapse: collapse;
}
.list th {
  height: 19px;
  font-weight: normal;
  text-align: left;
  background: linear-gradient(#505050, #404040);
  border-bottom: 2px solid #121212;
  padding: 0 0 0 4px;
  position: relative;
  overflow: hidden;
}
.list th + th::before {
  content: "";
  position: absolute;
  left: 0;
  top: 4px;
  height: 11px;
  border-left: 1px solid #222;
}
.list td { height: 19px; border-bottom: 1px solid #383838; padding: 0 0 0 6px; overflow: hidden; }
.list td > * { display: inline-block; vertical-align: middle; margin: -2px 7px -2px 0; }
.files th:nth-child(1) { width: 181px; }
.files th:nth-child(2) { width: 41px; }
.files th:nth-child(3) { width: 101px; }
.files th:nth-child(4) { width: 76px; }
.files th:nth-child(5) { width: 61px; }
.files td:first-child { padding-left: 26px; }
.files td:nth-child(3) { padding-left: 15px; }
.open-file { color: #cdbb80; font-weight: 600; }
.media th:nth-child(1) { width: 201px; }
.media th:nth-child(2) { width: 101px; }
.media td:first-child { padding-left: 4px; }
.media td .tw { margin-right: 12px; }
.media td.num { padding-left: 14px; }
.sel { background: #4f4f4f; }
.sort {
  position: absolute;
  right: 5px;
  top: 7px;
  border: 6px solid transparent;
  border-top: 0;
  border-bottom: 6px solid #999;
}
.hscroll {
  height: 12px;
  flex: none;
  display: flex;
  align-items: center;
  background: #363636;
  border-top: 1px solid #151515;
}
.hscroll .r { margin-left: auto; }
.thumb { background: #474747; border: 1px solid #151515; border-width: 0 1px; height: 100%; }
.w1 { width: 160px; }
.w2 { width: 19px; }
.w3 { width: 89px; }
.corner { width: 12px; height: 100%; background: #414141; border-left: 1px solid #151515; }
.arr { border: 4px solid transparent; margin: 0 5px; flex: none; }
.arr.l { border-right: 5px solid #b0b0b0; border-left: 0; }
.arr.r { border-left: 5px solid #b0b0b0; border-right: 0; }
.arr.u { border-bottom: 5px solid #b0b0b0; border-top: 0; margin: 5px auto; }
.arr.d { border-top: 5px solid #b0b0b0; border-bottom: 0; margin: auto auto 4px; }
.vscroll {
  width: 12px;
  flex: none;
  background: #363636;
  border-left: 1px solid #151515;
  display: flex;
  flex-direction: column;
}
.vscroll .thumb { width: 100%; height: 60px; border-width: 1px 0; }

/* Buttons */
.btn {
  width: 26px;
  height: 23px;
  border: 1px solid #171717;
  outline: 1px solid #4c4c4c;
  background: linear-gradient(#505050, #3c3c3c);
}
.btn.off { border-color: #333; background: #414141; color: #6a6a6a; }
.green { color: #8fc31f; }
.preview-bar {
  display: flex;
  justify-content: center;
  gap: 4px;
  padding-top: 5px;
  height: 28px;
  flex: none;
}

/* Files panel */
.file-tools { display: flex; gap: 11px; padding-left: 2px; height: 23px; flex: none; }
.file-tools .search { margin-left: auto; }

/* Media browser */
.media-tools {
  display: flex;
  align-items: center;
  gap: 7px;
  height: 25px;
  padding: 0 8px 5px 3px;
  flex: none;
}
.media-tools label { margin-left: 97px; }
.media-tools .drop { width: 162px; }
.media-tools .off { margin: 0 7px 0 4px; }
.media-split {
  flex: 1;
  min-height: 0;
  display: grid;
  grid-template-columns: 114px 10px minmax(0, 1fr);
}
.tree-box { margin-bottom: 1px; }
.tree-row { flex: 1; min-height: 0; display: flex; }
.tree { flex: 1; overflow: hidden; }
.tree li { display: flex; align-items: center; height: 19px; gap: 6px; padding-left: 4px; }
.tree svg { margin-left: 4px; }
.tree .d1 { padding-left: 24px; }
.tree .d2 { padding-left: 44px; }
.tree .d3 { padding-left: 64px; }
.tree .d1 svg, .tree .d2 svg, .tree .d3 svg { margin-left: 3px; }
.tw {
  border: 5px solid transparent;
  border-left: 6px solid #bbb;
  border-right: 0;
  margin-right: 2px;
  flex: none;
}
.tw.open { border: 4px solid transparent; border-top: 7px solid #bbb; border-bottom: 0; margin-right: 0; }
.tw.none { border-color: transparent; }
.tw.left { border: 3px solid transparent; border-right: 4px solid #ccc; border-left: 0; margin: 16px 0 130px; }
.splitter { display: flex; flex-direction: column; align-items: center; }
.media-list { display: flex; flex-direction: column; min-width: 0; }
.media-list .preview-bar { height: 31px; }

/* History */
.history li { display: flex; align-items: center; gap: 9px; height: 19px; border-bottom: 1px solid #383838; }
.mark { width: 12px; padding-left: 2px; }
.history { flex: 1; }
.undo-bar { display: flex; align-items: center; height: 24px; padding: 7px 5px 0 0; flex: none; }

/* Editor */
.editor-tab { padding: 0 5px 0 3px; }
.editor-tab .drop { width: 344px; }
.panel-body.editor { padding: 6px 0 0; }
.editor-grid {
  flex: 1;
  min-height: 0;
  display: grid;
  grid-template-columns: minmax(0, 1fr) 62px;
  grid-template-rows: 29px 17px 25px minmax(0, 1fr) 10px;
  padding: 0 7px 0 6px;
}
.overview, .overview-side { grid-row: 1; }
.ruler, .ruler-side { grid-row: 3; }
.wave, .db { grid-row: 4; min-height: 0; }
.overview {
  border: 1px solid #0d0d0d;
  overflow: hidden;
  position: relative;
}
.overview::after {
  content: "";
  position: absolute;
  inset: 0;
  border: 1px solid #d99a1a;
  border-left: 6px solid rgba(228, 165, 30, .7);
  border-right: 6px solid rgba(228, 165, 30, .7);
  background: linear-gradient(rgba(255, 255, 255, .15), rgba(60, 60, 60, .3));
}
.overview-side {
  display: flex;
  align-items: center;
  padding-left: 12px;
  position: relative;
  z-index: 1;
}
.ruler {
  background: #3b5d4d;
  border: 1px solid #121212;
  position: relative;
  color: #b4cfc0;
}
.ruler-side { padding: 2px 0 0 7px; }
.playhead { position: absolute; left: -6px; bottom: 0; z-index: 1; }
.snap, .ch { width: 20px; height: 20px; background: #2c2c2c; }
.wave {
  position: relative;
  background: #f4f4ff;
  border-left: 1px solid #c80000;
  border-right: 1px solid #d8d8e8;
}
.wave > svg, .overview > svg { width: 100%; height: 100%; }
.fade {
  position: absolute;
  top: 12px;
  width: 12px;
  height: 13px;
  border: 1px solid #ddd;
  background: linear-gradient(135deg, #f0f0f0 50%, #aaa 50%);
  box-shadow: 1px 1px 2px #999;
}
.fl { left: 8px; }
.fr { right: 9px; background: linear-gradient(45deg, #aaa 50%, #f0f0f0 50%); }
.db {
  position: relative;
  background: #383838;
  border: 1px solid #151515;
  border-bottom: 0;
  display: flex;
  flex-direction: column;
}
.db > svg { position: absolute; inset: 0; }
.chan { flex: 1; display: flex; align-items: center; justify-content: flex-end; padding-right: 2px; position: relative; }
.ch { height: 17px; }
.wave-scroll {
  grid-row: 5;
  grid-column: 1 / -1;
  background: linear-gradient(#4e4e4e, #3c3c3c);
  border-bottom: 1px solid #151515;
  display: flex;
  align-items: center;
  justify-content: flex-end;
  padding-right: 17px;
}
.wave-scroll .grip { margin-right: auto; margin-left: 50%; }
.up { border: 3px solid transparent; border-bottom: 3px solid #ccc; border-top: 0; }
.transport {
  height: 36px;
  display: grid;
  grid-template-columns: 506fr 296px 625fr;
  align-items: center;
  padding-top: 3px;
}
.hot {
  color: #c8930e;
  border-bottom: 1px dotted #c8930e;
  outline: 0;
  width: 44px;
  height: 13px;
}
.hot.time { font-size: 16px; width: 64px; height: 21px; margin-left: 10px; }
.keys { display: flex; gap: 4px; }
.zooms { display: flex; justify-content: flex-end; padding-right: 9px; }
.zooms .flat { width: 30px; }

/* Levels */
.panel-body.levels { padding: 4px 4px 0 5px; }
.level-box {
  height: 36px;
  flex: none;
  background: #000;
  border: 1px solid #6a6a6a;
  display: flex;
  justify-content: space-between;
}
.level-start { width: 1px; background: #d8d800; }
.clip {
  width: 9px;
  border-left: 1px solid #6a6a6a;
  background: linear-gradient(#000 50%, #6a6a6a 50%, #6a6a6a 53%, #000 53%);
}
text { fill: currentColor; font-size: 11px; }
#level-scale text { font-size: 10px; }

/* Selection table */
.panel-body.times { padding-top: 1px; }
.selview { border-collapse: collapse; margin-left: 5px; align-self: flex-start; }
.selview th { font-weight: normal; text-align: left; width: 69px; padding: 0; }
.selview th:first-child { width: 27px; }
.selview tr { height: 20px; }
.selview td { vertical-align: middle; }
.selview tr:first-child { height: 14px; }

/* Status bar */
.status {
  height: 18px;
  flex: none;
  background: #414141;
  border-top: 1px solid #505050;
  display: flex;
  align-items: center;
}
.msg { margin: 0 auto 0 8px; }
.cell { border-left: 1px solid #222; height: 13px; line-height: 13px; text-align: center; }
.s50 { width: 50px; }
.s145 { width: 145px; }
.s61 { width: 61px; }
.s65 { width: 65px; text-align: right; padding-right: 7px; }
.s83 { width: 83px; }
.s48 { width: 48px; }
.taskline { height: 2px; flex: none; background: #c00a0a; display: flex; }
.taskline span { height: 2px; }
.taskline .a { width: 304px; margin-left: 48px; background: #e0e0e0; }
.taskline .b { width: 40px; background: #f0a0a0; }
.taskline .d { width: 48px; margin-left: 590px; background: #e81818; }

/* Volume HUD */
.hud {
  position: absolute;
  left: 1778px;
  top: 115px;
  width: 126px;
  height: 26px;
  background: rgba(60, 60, 60, .9);
  border: 1px solid #333;
  box-shadow: 0 0 3px #111;
  display: flex;
  align-items: center;
  gap: 5px;
  padding: 0 3px;
}
.hot.gain { width: 14px; }
.unit { margin-left: -3px; }
.pin { width: 12px; height: 12px; margin-left: auto; }

/* Effect window */
.dialog {
  position: absolute;
  left: 619px;
  top: 322px;
  width: 921px;
  background: #404040;
  box-shadow: 0 4px 14px rgba(0, 0, 0, .5);
}
.dlg-title {
  height: 31px;
  background: #ff1b1b;
  color: #fff;
  font-size: 12px;
  display: flex;
  align-items: center;
  justify-content: space-between;
  padding: 0 1px 0 8px;
}
.dlg-x { width: 19px; height: 19px; background: #c75050; font-weight: bold; line-height: 12px; }
.dlg-body { padding: 0 15px; }
.preset-row {
  display: flex;
  align-items: center;
  height: 45px;
  padding-top: 6px;
  border-bottom: 1px solid #1f1f1f;
  box-shadow: 0 1px #505050;
  gap: 7px;
}
.preset-row .drop { width: 204px; margin: 0 6px 0 5px; }
.preset-row .flat { width: 16px; }
.groups {
  display: grid;
  grid-template-columns: 196fr 298fr 362fr;
  gap: 10px;
  padding: 13px 7px 14px 8px;
  border-bottom: 1px solid #1f1f1f;
  box-shadow: 0 1px #505050;
}
.dialog fieldset {
  border: 1px solid #1f1f1f;
  min-width: 0;
  height: 265px;
  padding: 0 2px;
  color: #b4b4b4;
  font-family: "DejaVu Sans Condensed", "Open Sans", sans-serif;
  font-size: 10px;
}
.dialog legend { margin-left: 5px; padding: 0 2px; line-height: 14px; }
.strip { display: flex; padding-top: 6px; }
.fader { width: 49px; flex: none; }
.wide .fader { width: 53px; }
.head {
  height: 28px;
  display: flex;
  flex-direction: column;
  justify-content: flex-end;
  text-align: center;
  width: 64px;
}
.fader-body { display: flex; height: 183px; }
.marks {
  width: 22px;
  display: flex;
  flex-direction: column;
  justify-content: space-between;
  text-align: right;
  line-height: 12px;
}
.fader-body svg { margin: 0 -3px 0 2px; }
.fader-body input {
  appearance: none;
  writing-mode: vertical-lr;
  direction: rtl;
  width: 14px;
  height: 175px;
  margin: 4px 0 0 -3px;
  background: linear-gradient(90deg, transparent 5px, #0c0c0c 5px 6px, #2b2b2b 6px 8px, #0c0c0c 8px 9px, transparent 9px);
}
.fader-body input::-webkit-slider-thumb {
  appearance: none;
  width: 14px;
  height: 8px;
  border-radius: 50%;
  border: 2px solid #161616;
  background: #444;
}
.value { width: 32px; padding-top: 1px; display: flex; justify-content: flex-end; }
.meters { display: flex; padding-top: 19px; margin-left: -3px; }
.meter { width: 16px; display: flex; flex-direction: column; align-items: center; }
.meter i {
  width: 6px;
  height: 174px;
  margin-top: 1px;
  background: #000;
  border-right: 1px solid #a0a0a0;
  border-bottom: 1px solid #a0a0a0;
}
.reverb {
  display: grid;
  grid-template-columns: 80px 1fr;
  grid-template-rows: 29px 30px repeat(5, 32px);
  column-gap: 10px;
  padding-top: 13px;
  align-items: center;
}
.reverb > label, .reverb > span { text-align: right; }
.impulse { display: flex; gap: 7px; align-items: center; }
.impulse .drop { width: 143px; }
.load { width: 49px; height: 18px; }
.notch { width: 6px; height: 5px; background: #c6c6c6; margin-left: -2px; }
.dlg-foot { display: flex; gap: 7px; height: 44px; padding-top: 10px; }
.dlg-foot .btn { height: 19px; }
.btn.power { width: 17px; background: linear-gradient(#52e09c, #2a9c68); }
.btn.w31 { width: 31px; }
.btn.w78 { width: 78px; }
.dlg-foot .w78 + .w78 { margin-left: 5px; }

/* Impulse list */
.popup {
  position: absolute;
  left: 940px;
  top: 462px;
  width: 390px;
  padding: 2px;
  background: #f1f1f1;
  border: 1px solid #c8c8c8;
  box-shadow: 2px 2px 3px rgba(0, 0, 0, .5);
  color: #000;
  font-family: "Noto Sans", sans-serif;
}
.popup li { line-height: 22px; padding-left: 32px; }
.popup .checked {
  background:
    radial-gradient(circle at 11px 11px, #222 3px, transparent 4px),
    linear-gradient(90deg, #91c8f6 22px, transparent 22px);
}
```
FILE: script.js
```js
const W = 1350, H = 756, HALF = 189;
const DB_STEPS = [[1, 168], [3, 133], [6, 94], [9, 67], [12, 47], [15, 34], [21, 17]];

// Seeded generator, so the clip looks the same on every load
let seed = 20177;
function rnd() {
  seed = (seed * 1664525 + 1013904223) % 4294967296;
  return seed / 4294967296;
}

// x, quiet floor, spread: how far the peaks stay away from full scale
const ENV = [
  [54, 20, 60], [100, 16, 66], [112, 0, 66], [345, 0, 66], [660, 0, 66], [684, 12, 80],
  [688, 55, 110], [716, 60, 100], [724, 10, 70], [1095, 0, 66], [1108, 10, 80],
  [1122, 28, 76], [1150, 44, 74], [1158, 70, 70], [1170, 30, 60], [1180, 0, 62],
  [1310, 0, 68], [1317, 10, 80], [1319, 75, 50], [1334, 70, 70]
];
function envelope(x) {
  for (let i = 1; i < ENV.length; i++) {
    if (x <= ENV[i][0]) {
      const a = ENV[i - 1], b = ENV[i], t = (x - a[0]) / (b[0] - a[0]);
      return [a[1] + (b[1] - a[1]) * t, a[2] + (b[2] - a[2]) * t];
    }
  }
  return [75, 60];
}

function peak(x) {
  if (x < 2) return 0;
  if (x < 4) return 44;
  if (x < 6) return 3;
  if (x < 9) return 60 + rnd() * 28;
  if (x < 12) return 2;
  if (x < 17) return 70 + rnd() * 40;
  if (x < 21) return 0;
  if (x < 36) return (x - 20) * (x - 20) / 10;
  if (x < 46) return 24 + (x - 36) * 1.5 + rnd() * 5;
  if (x < 48) return 50 + rnd() * 6;
  if (x < 50) return 113;
  if (x < 51) return 140;
  if (x < 53) return 96;
  if (x > 1336) return 0;
  if (x > 1333) return (1337 - x) * 2.5;
  const [floor, spread] = envelope(x);
  const k = rnd();
  // loud and soft bars drift a little along the clip
  const drift = .85 + .22 * Math.sin(x / 9) + .13 * Math.sin(x / 23 + 1);
  const r = k < .3 ? rnd() * .14 : k < .94 ? .1 + rnd() * .6 : .7 + rnd() * .6;
  return Math.min(HALF, HALF - floor - spread * r * drift);
}

// One closed outline per channel
function channelPath(mid, dips) {
  let top = '', bottom = '';
  for (let x = 0; x < W; x++) {
    let up = peak(x), down = peak(x);
    if (dips[x]) up = down = HALF - dips[x];
    top += 'V' + (mid - up).toFixed(1) + 'h1';
    bottom = 'V' + (mid + down).toFixed(1) + 'h-1' + bottom;
  }
  return 'M0 ' + mid + top + 'V' + mid + bottom + 'Z';
}

const dips = { 346: 125, 675: 189, 679: 110, 690: 170, 695: 139, 707: 146, 710: 188, 732: 112, 787: 102, 524: 86, 1156: 125, 1157: 133, 1159: 110 };
const wave = channelPath(HALF, dips) + channelPath(HALF * 3, dips);

let grid = '';
for (let i = 1; i < 24; i++) grid += `M${(i * 56.3).toFixed(1)} 0V${H}`;
[HALF, HALF * 3].forEach(mid => DB_STEPS.forEach(s => {
  grid += `M0 ${mid - s[1]}H${W}M0 ${mid + s[1]}H${W}`;
}));

document.getElementById('wave').insertAdjacentHTML('afterbegin',
  `<svg viewBox="0 0 ${W} ${H}" preserveAspectRatio="none" shape-rendering="crispEdges">
    <path d="${grid}" stroke="#cfe3cf" fill="none"/>
    <path d="${wave}" fill="#294338"/>
    <path d="${grid}" stroke="#223c31" stroke-opacity=".15" fill="none"/>
    <path d="M0 ${HALF}H${W}M0 ${HALF * 3}H${W}" stroke="#26261c"/>
    <path d="M0 378H${W}" stroke="#85808d"/>
  </svg>`);
document.getElementById('overview').innerHTML =
  `<svg viewBox="0 0 ${W} ${H}" preserveAspectRatio="none">
    <rect width="${W}" height="${H}" fill="#d6d4da"/>
    <path d="${wave}" fill="#5f746a"/>
    <path d="M0 378H${W}" stroke="#555" stroke-width="30"/>
  </svg>`;

// Time ruler
let ruler = '<text x="8" y="14" opacity=".6">hms</text>';
for (let s = 5; s < 240; s += 5) {
  const x = (s / 240 * 100).toFixed(3) + '%';
  const major = s % 10 === 0;
  ruler += `<line x1="${x}" x2="${x}" y1="${major ? 17 : 20}" y2="24" stroke="#b4cfc0"/>`;
  if (major) ruler += `<text x="${x}" y="14" text-anchor="middle">${Math.floor(s / 60)}:${String(s % 60).padStart(2, '0')}</text>`;
}
document.getElementById('ruler').innerHTML = ruler;

// dB scale beside the waveform
let db = '';
function dbMark(y, label, tick) {
  const p = (y / H * 100).toFixed(2) + '%';
  if (tick) db += `<line x1="0" x2="4" y1="${p}" y2="${p}" stroke="#b0b0b0"/>`;
  db += `<text x="8" y="${p}" dy="4">${label}</text>`;
}
[HALF, HALF * 3].forEach(mid => {
  dbMark(mid - 181, 'dB', false);
  dbMark(mid, '-∞', true);
  DB_STEPS.forEach(([n, o]) => {
    dbMark(mid - o, '-' + n, true);
    dbMark(mid + o, '-' + n, true);
  });
  for (const o of [178, 159, 150, 141, 120, 107, 85, 76, 60, 53, 42, 38, 31, 28, 25, 22, 20]) {
    [mid - o, mid + o].forEach(y => {
      const p = (y / H * 100).toFixed(2) + '%';
      db += `<line x1="0" x2="2" y1="${p}" y2="${p}" stroke="#b0b0b0"/>`;
    });
  }
});
document.getElementById('db').innerHTML = db;

// Level meter scale
let lv = '';
for (let d = -60; d <= 0; d++) {
  const x = (.1 + (d + 60) / 60 * 98.9).toFixed(2) + '%';
  lv += `<line x1="${x}" x2="${x}" y1="1" y2="${d % 3 ? 3 : 5}" stroke="#b0b0b0"/>`;
  if (d % 3 === 0 && d > -60) lv += `<text x="${x}" y="16" text-anchor="middle">${d}</text>`;
}
lv += '<text x="0" y="16">dB</text>';
document.getElementById('level-scale').innerHTML = lv;

// Faders and meters of the effect window
function fader(head, marks, sub, value, pos) {
  const n = (marks.length - 1) * sub;
  let ticks = '';
  for (let i = 0; i <= n; i++) {
    const y = Math.round(6 + i * 171 / n) + .5;
    ticks += i % sub ? `M3 ${y}h2` : `M1 ${y}h4`;
  }
  return `<div class="fader">
    <div class="head">${head.split('|').map(t => `<span>${t}</span>`).join('')}</div>
    <div class="fader-body">
      <div class="marks">${marks.map(m => `<span>${m}</span>`).join('')}</div>
      <svg width="8" height="183"><path d="${ticks}" stroke="#b0b0b0"/></svg>
      <input type="range" min="0" max="100" value="${pos}" aria-label="${head.replace('|', ' ')}">
    </div>
    <div class="value"><input class="hot" value="${value}" aria-label="${head.replace('|', ' ')} value" style="width:${value.length * 6 - 1}px"></div>
  </div>`;
}
const PCT = [100, 80, 60, 40, 20, 0];
const meters = '<div class="meters">' + ['L', 'R', 'C', 'LFE', 'Ls', 'Rs'].map(c => `<div class="meter">${c}<i></i></div>`).join('') + '</div>';

document.getElementById('input-strip').innerHTML =
  fader('Center', PCT, 4, '100.0', 100) + fader('LFE', PCT, 4, '98.8', 99) + meters;
document.getElementById('output-strip').innerHTML =
  fader('C Wet|Level', PCT, 4, '100.0', 100) +
  fader('L/R Bal.', [100, 60, 20, -20, -60, -100], 4, '0.0', 50) +
  fader('F/B Bal.', [100, 60, 20, -20, -60, -100], 4, '0.0', 50) +
  fader('Wet/Dry|Mix', PCT, 4, '75.9', 76) +
  fader('Gain', [18, 14, 11, 7, 4, 0, -4, -7, -11, -14, -18], 4, '7.6', 71) + meters;
```
